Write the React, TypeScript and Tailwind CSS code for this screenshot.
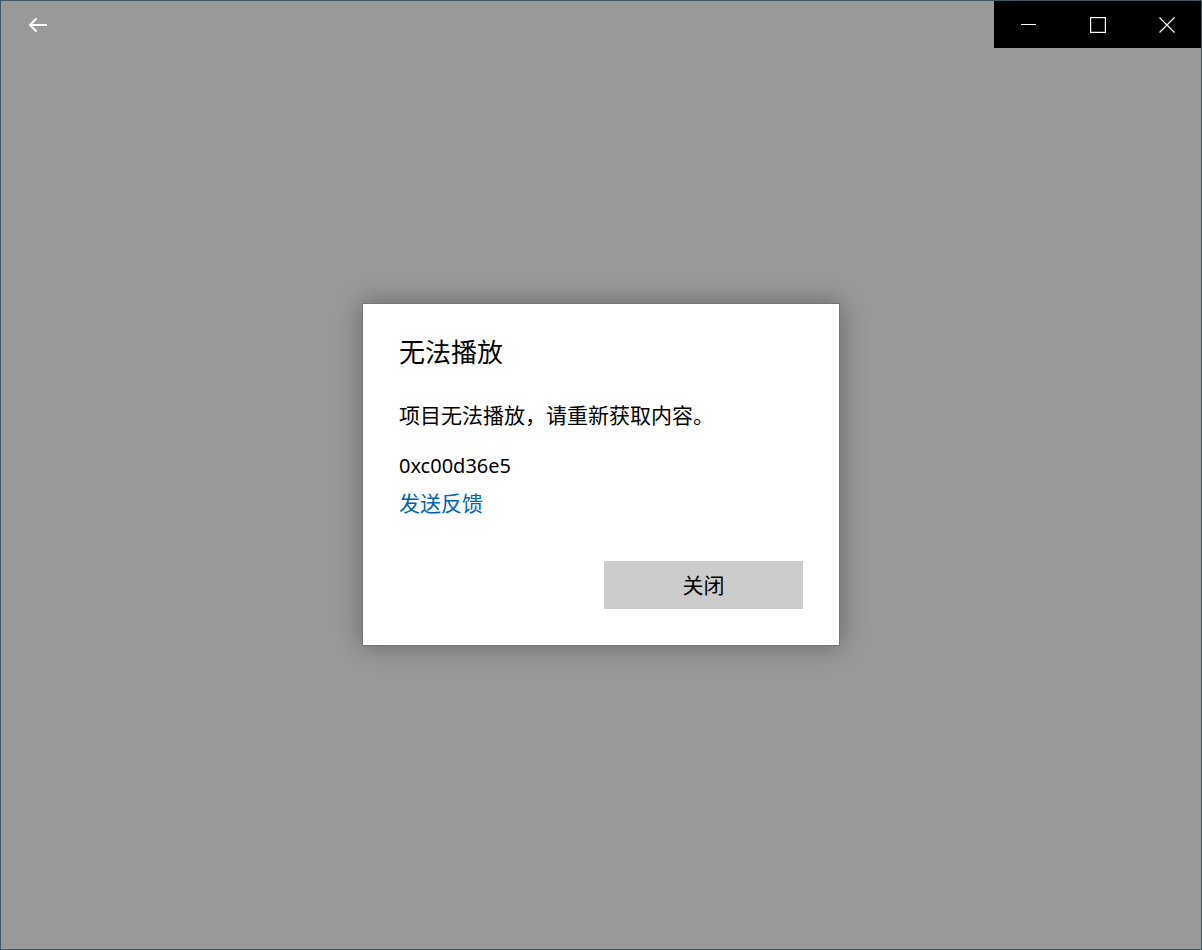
export default function App() {
  return (
    <div className="w-[1202px] h-[950px] border border-[#3f5866] bg-[#999999] flex flex-col font-['Noto_Sans_CJK_SC','Noto_Sans',sans-serif]">
      <div className="h-[47px] flex items-start justify-between">
        <button className="w-[74px] h-[47px] flex items-center justify-center">
          <svg width="20" height="16" viewBox="0 0 20 16" fill="none" stroke="white" strokeWidth="2">
            <path d="M19 8H2" />
            <path d="M8.5 1.5L2 8l6.5 6.5" />
          </svg>
        </button>
        <div className="flex bg-black h-[47px]">
          <button className="w-[69px] h-full flex items-center justify-center">
            <svg width="15" height="15" viewBox="0 0 15 15" stroke="white" strokeWidth="1">
              <path d="M0 7.5H15" />
            </svg>
          </button>
          <button className="w-[69px] h-full flex items-center justify-center">
            <svg width="16" height="16" viewBox="0 0 16 16" fill="none" stroke="white" strokeWidth="1.2">
              <rect x="0.6" y="0.6" width="14.8" height="14.8" />
            </svg>
          </button>
          <button className="w-[69px] h-full flex items-center justify-center">
            <svg width="16" height="16" viewBox="0 0 16 16" fill="none" stroke="white" strokeWidth="1.2">
              <path d="M0.5 0.5L15.5 15.5M15.5 0.5L0.5 15.5" />
            </svg>
          </button>
        </div>
      </div>
      <div className="flex-1 flex items-center justify-center pb-[49px]">
        <div className="w-[478px] bg-white border border-[#767676] shadow-[0_0_24px_rgba(0,0,0,0.35)] pt-[30px] pl-[36px] pr-[36px] pb-[36px] flex flex-col">
          <h2 className="text-[26px] leading-[34px] text-black">无法播放</h2>
          <p className="mt-[32px] text-[21px] leading-[28px] text-black">项目无法播放，请重新获取内容。</p>
          <p className="mt-[24px] text-[20px] leading-[28px] text-black font-['Noto_Sans',sans-serif]">0xc00d36e5</p>
          <a className="mt-[8px] text-[21px] leading-[28px] text-[#0063b1] w-fit">发送反馈</a>
          <div className="mt-[45px] flex justify-end">
            <button className="w-[199px] h-[48px] bg-[#cccccc] text-[21px] text-black">关闭</button>
          </div>
        </div>
      </div>
    </div>
  )
}
